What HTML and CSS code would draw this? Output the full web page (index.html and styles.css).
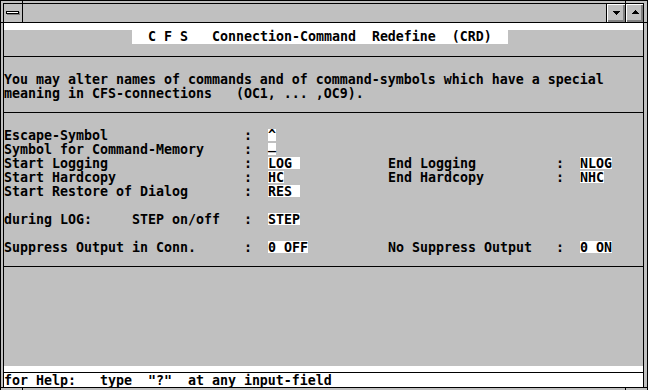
FILE: index.html
```html
<!DOCTYPE html>
<html lang="en">
<head>
    <meta charset="UTF-8">
    <title>CFS Connection-Command Redefine</title>
    <link rel="stylesheet" href="styles.css">
</head>
<body>
    <div class="window">
        <div class="frame">
            <div class="titlebar">
                <div class="sysmenu">
                    <svg width="18" height="18" viewBox="0 0 18 18" shape-rendering="crispEdges">
                        <rect x="2" y="7" width="13" height="3" fill="#000"/>
                        <rect x="3" y="8" width="11" height="1" fill="#fff"/>
                        <rect x="3" y="10" width="13" height="1" fill="#808080"/>
                        <rect x="15" y="8" width="1" height="3" fill="#808080"/>
                    </svg>
                </div>
                <div class="caption"></div>
                <div class="tbtn">
                    <svg width="18" height="18" viewBox="0 0 18 18" shape-rendering="crispEdges">
                        <rect x="6" y="7" width="7" height="1"/>
                        <rect x="7" y="8" width="5" height="1"/>
                        <rect x="8" y="9" width="3" height="1"/>
                        <rect x="9" y="10" width="1" height="1"/>
                    </svg>
                </div>
                <div class="tbtn narrow">
                    <svg width="17" height="18" viewBox="0 0 17 18" shape-rendering="crispEdges">
                        <rect x="9" y="6" width="1" height="1"/>
                        <rect x="8" y="7" width="3" height="1"/>
                        <rect x="7" y="8" width="5" height="1"/>
                        <rect x="6" y="9" width="7" height="1"/>
                    </svg>
                </div>
            </div>

            <div class="client">
                <div class="band"></div>
                <div class="title-row"><span class="title-box">  C F S   Connection-Command  Redefine  (CRD)  </span></div>
                <div class="gap"></div>
                <div class="rule"></div>
                <div class="gap-lg"></div>
                <div class="row">You may alter names of commands and of command-symbols which have a special</div>
                <div class="row">meaning in CFS-connections   (OC1, ... ,OC9).</div>
                <div class="gap"></div>
                <div class="rule"></div>
                <div class="gap-lg"></div>

                <div class="row">
                    <span class="lbl">Escape-Symbol</span><span class="colon">:</span><span class="val"><span class="field">^</span></span>
                </div>
                <div class="row">
                    <span class="lbl">Symbol for Command-Memory</span><span class="colon">:</span><span class="val"><span class="field low">_</span></span>
                </div>
                <div class="row">
                    <span class="lbl">Start Logging</span><span class="colon">:</span><span class="val"><span class="field">LOG </span></span><span class="lbl2">End Logging</span><span class="colon">:</span><span class="field">NLOG</span>
                </div>
                <div class="row">
                    <span class="lbl">Start Hardcopy</span><span class="colon">:</span><span class="val"><span class="field">HC</span></span><span class="lbl2">End Hardcopy</span><span class="colon">:</span><span class="field">NHC</span>
                </div>
                <div class="row">
                    <span class="lbl">Start Restore of Dialog</span><span class="colon">:</span><span class="val"><span class="field">RES </span></span>
                </div>
                <div class="row"></div>
                <div class="row">
                    <span class="lbl">during LOG:     STEP on/off</span><span class="colon">:</span><span class="val"><span class="field">STEP</span></span>
                </div>
                <div class="row"></div>
                <div class="row">
                    <span class="lbl">Suppress Output in Conn.</span><span class="colon">:</span><span class="val"><span class="field">0 OFF</span></span><span class="lbl2">No Suppress Output</span><span class="colon">:</span><span class="field">0 ON</span>
                </div>

                <div class="gap"></div>
                <div class="rule"></div>
                <div class="filler"></div>
                <div class="band-bottom"></div>
                <div class="status">for Help:   type  "?"  at any input-field</div>
            </div>
        </div>

        <!-- resize corner marks of the frame -->
        <span class="notch v tl"></span>
        <span class="notch v tr"></span>
        <span class="notch v bl"></span>
        <span class="notch v br"></span>
        <span class="notch h lt"></span>
        <span class="notch h rt"></span>
        <span class="notch h lb"></span>
        <span class="notch h rb"></span>
    </div>
</body>
</html>
```

FILE: styles.css
```css
body {
    margin: 0;
    width: 648px;
    height: 390px;
    overflow: hidden;
    background-color: #c0c0c0;
}
.window {
    position: relative;
    box-sizing: border-box;
    width: 648px;
    height: 391px;
    border: 1px solid #000;
    padding: 2px 3px 2px 2px;
    background: #c0c0c0;
}
.frame {
    box-sizing: border-box;
    height: 100%;
    border: 1px solid #000;
    display: flex;
    flex-direction: column;
}
.titlebar {
    display: flex;
    height: 18px;
    border-bottom: 1px solid #000;
    background: #c0c0c0;
}
.sysmenu {
    width: 18px;
    border-right: 1px solid #000;
}
.sysmenu svg, .tbtn svg {
    display: block;
}
.caption {
    flex: 1;
}
.tbtn {
    width: 18px;
    border-left: 1px solid #000;
    box-shadow: inset 1px 1px #fff, inset -1px -1px #808080, inset -2px -2px #808080;
}
.tbtn.narrow {
    width: 17px;
}
.client {
    flex: 1;
    display: flex;
    flex-direction: column;
    background: #c0c0c0;
    color: #000;
    font-family: "DejaVu Sans Mono", monospace;
    font-weight: bold;
    font-size: 13.29px;
    line-height: 15px;
    white-space: pre;
}
.band {
    height: 7px;
    background: #fff;
}
.title-row {
    height: 14px;
    padding-left: 128px;
}
.title-box {
    display: inline-block;
    height: 14px;
    line-height: 14px;
    vertical-align: top;
    background: #fff;
}
.gap {
    height: 12px;
}
.gap-lg {
    height: 15px;
}
.rule {
    height: 1px;
    background: #000;
}
.row {
    display: flex;
    height: 14px;
}
.lbl {
    width: 240px;
}
.colon {
    width: 24px;
}
.val {
    width: 120px;
}
.lbl2 {
    width: 168px;
}
.field {
    display: inline-block;
    height: 12px;
    margin-top: 1px;
    line-height: 13px;
    vertical-align: top;
    background: #fff;
}
.field.low {
    line-height: 3px;
}
.filler {
    flex: 1;
}
.band-bottom {
    height: 6px;
    background: #fff;
}
.status {
    height: 14px;
    border-top: 1px solid #000;
    background: #fff;
}
.notch {
    position: absolute;
    background: #000;
}
.notch.v {
    width: 1px;
}
.notch.h {
    height: 1px;
}
.notch.tl { left: 21px; top: -1px; height: 4px; }
.notch.tr { left: 624px; top: -1px; height: 4px; }
.notch.bl { left: 21px; top: 387px; height: 4px; }
.notch.br { left: 624px; top: 387px; height: 4px; }
.notch.lt { left: -1px; top: 21px; width: 4px; }
.notch.rt { left: 642px; top: 21px; width: 5px; }
.notch.lb { left: -1px; top: 386px; width: 4px; }
.notch.rb { left: 642px; top: 386px; width: 5px; }
```
